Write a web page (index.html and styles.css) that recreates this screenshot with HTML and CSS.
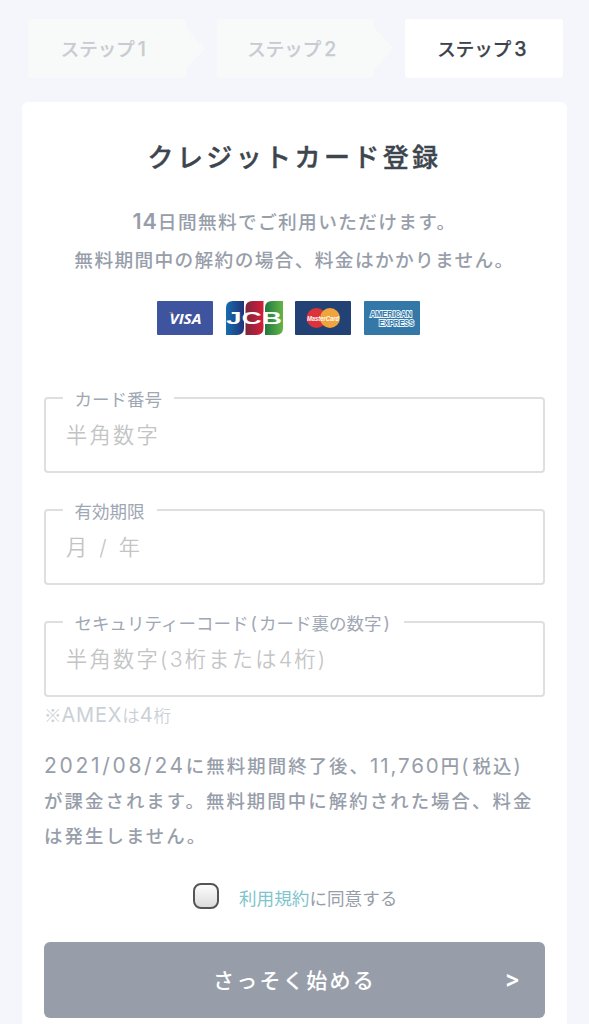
FILE: index.html
```html
<!DOCTYPE html>
<html lang="ja">
<head>
<meta charset="utf-8">
<title>クレジットカード登録</title>
<link rel="stylesheet" href="styles.css">
</head>
<body>
<ol class="steps">
  <li class="step step-next"><span>ステップ<span class="step-num">1</span></span></li>
  <li class="step step-next"><span>ステップ<span class="step-num">2</span></span></li>
  <li class="step step-current"><span>ステップ<span class="step-num">3</span></span></li>
</ol>
<main class="card">
  <h1 class="title">クレジットカード登録</h1>
  <p class="lead"><span class="lead-num">14</span>日間無料でご利用いただけます。<br>無料期間中の解約の場合、料金はかかりません。</p>
  <div class="brands">
    <svg class="brand" viewBox="0 0 56 34">
      <rect width="56" height="34" rx="1" fill="#3f549f"/>
      <text x="12.5" y="22.5" textLength="32" lengthAdjust="spacingAndGlyphs" class="visa">VISA</text>
      <path d="M11.500 11.500h4l1.500 3c-1.500-1.500-3-2.300-5.500-3z" fill="#e5aa55"/>
    </svg>
    <svg class="brand" viewBox="0 0 57 34">
      <defs>
        <linearGradient id="blue"><stop stop-color="#176cad"/><stop offset="1" stop-color="#203379"/></linearGradient>
        <linearGradient id="red"><stop stop-color="#7d263e"/><stop offset="1" stop-color="#d51e38"/></linearGradient>
        <linearGradient id="green"><stop stop-color="#207a41"/><stop offset="1" stop-color="#65b447"/></linearGradient>
      </defs>
      <path d="M0 34V7q0-7 7-7h11v27q0 7-7 7z" fill="url(#blue)"/>
      <path d="M19.500 34V7q0-7 7-7h11v27q0 7-7 7z" fill="url(#red)"/>
      <path d="M39 34V7q0-7 7-7h11v27q0 7-7 7z" fill="url(#green)"/>
      <text x="0" y="23" textLength="56" lengthAdjust="spacingAndGlyphs" class="jcb">JCB</text>
    </svg>
    <svg class="brand" viewBox="0 0 56 34">
      <rect width="56" height="34" rx="1" fill="#224275"/>
      <circle cx="21.500" cy="17" r="10" fill="#dc333a"/>
      <circle cx="35" cy="17" r="10" fill="#f1a43c"/>
      <text x="12" y="20" textLength="32" lengthAdjust="spacingAndGlyphs" class="master">MasterCard</text>
    </svg>
    <svg class="brand" viewBox="0 0 56 34">
      <rect width="56" height="34" rx="1" fill="#3478a8"/>
      <text x="6" y="15.500" textLength="42" lengthAdjust="spacingAndGlyphs" class="amex">AMERICAN</text>
      <text x="15" y="24.500" textLength="35" lengthAdjust="spacingAndGlyphs" class="amex">EXPRESS</text>
    </svg>
  </div>
  <form class="form">
    <fieldset class="field">
      <legend class="label">カード番号</legend>
      <input class="input" type="text" placeholder="半角数字">
    </fieldset>
    <fieldset class="field">
      <legend class="label">有効期限</legend>
      <input class="input input-date" type="text" placeholder="月 / 年">
    </fieldset>
    <fieldset class="field">
      <legend class="label">セキュリティーコード<span class="paren">(</span>カード裏の数字<span class="paren">)</span></legend>
      <input class="input" type="text" placeholder="半角数字(3桁または4桁)">
    </fieldset>
    <p class="note">※<span class="note-latin">AMEX</span>は<span class="note-latin">4</span>桁</p>
    <p class="notice"><span class="date">2021/08/24</span>に無料期間終了後、<span class="price">11,760</span>円<span class="notice-paren">(</span>税込<span class="notice-paren">)</span><br>が課金されます。無料期間中に解約された場合、料金<br>は発生しません。</p>
    <div class="agree">
      <input class="check" type="checkbox" id="agree">
      <label for="agree"><a class="link">利用規約</a>に同意する</label>
    </div>
    <button class="submit" type="button"><span>さっそく始める</span><span class="chevron">&gt;</span></button>
  </form>
</main>
</body>
</html>
```
FILE: styles.css
```css
* { box-sizing: border-box; }
body {
  margin: 0;
  height: 1024px;
  overflow: hidden;
  background: #f4f6fc;
  font-family: "Noto Sans CJK JP", sans-serif;
  color: #979eaa;
}
.steps {
  display: flex;
  gap: 31px;
  margin: 0;
  padding: 19px 28px 0;
  list-style: none;
}
.step {
  position: relative;
  flex: 0 0 157.500px;
  height: 59px;
  display: flex;
  align-items: center;
  justify-content: center;
  padding: 0 4px 2px 0;
  border-radius: 3px;
  font-size: 18.500px;
  font-weight: 500;
  white-space: nowrap;
  -webkit-text-stroke: .25px currentColor;
}
.step-num { margin-left: 3px; font: 500 19.500px/1 Inter, sans-serif; }
.step-next { background: #f8faf9; color: #c8ccd2; padding-right: 7px; }
.step-next::after {
  content: "";
  position: absolute;
  left: 157px;
  top: 8px;
  width: 20px;
  height: 43px;
  background: #f8faf9;
  clip-path: polygon(0 0, 100% 50%, 0 100%);
}
.step-current { background: #fff; color: #3c434c; }
.card {
  width: 545px;
  height: 940px;
  margin: 24px 0 0 22px;
  padding: 34px 22px 0;
  border-radius: 6px 6px 0 0;
  background: #fff;
}
.title {
  margin: 0;
  font-size: 26px;
  line-height: 40px;
  letter-spacing: 3.400px;
  font-weight: 500;
  text-align: center;
  color: #3d454e;
  -webkit-text-stroke: .4px currentColor;
}
.lead {
  margin: 26px 0 0;
  font-size: 18.700px;
  line-height: 37.500px;
  letter-spacing: 1.350px;
  font-weight: 500;
  text-align: center;
  white-space: nowrap;
}
.lead-num { font: 600 21.500px/1 Inter, sans-serif; letter-spacing: 1px; }
.brands { display: flex; justify-content: center; gap: 12.500px; margin-top: 24px; padding-right: 12px; }
.brand { height: 34px; display: block; }
.brand text { fill: #fff; }
.visa { font: italic 700 15px "Open Sans", sans-serif; }
.jcb { font: 700 17px "Liberation Sans", sans-serif; }
.master { font: italic 700 7px "Liberation Sans", sans-serif; }
.brand .amex { font: 700 8.500px "Liberation Sans", sans-serif; fill: #3478a8; stroke: #eaf4fa; stroke-width: 1.800px; paint-order: stroke; }
.form { display: flex; flex-direction: column; margin-top: 50px; }
.field {
  margin: 0 0 24px;
  height: 88px;
  min-width: 0;
  padding: 0 20px 0 17px;
  border: 2px solid #dedfe0;
  border-radius: 4px;
}
.label {
  padding: 2px 12px 0 11.500px;
  font-size: 17.500px;
  line-height: 24px;
  color: #a0a7b4;
  font-weight: 400;
}
.paren { display: inline-block; width: 10.500px; line-height: 1; font-family: Inter, sans-serif; text-align: center; }
.input {
  display: block;
  width: 100%;
  height: 32px;
  margin: 8px 0 0 3px;
  padding: 0;
  border: 0;
  outline: 0;
  font: 350 21.200px Inter, "Noto Sans CJK JP", sans-serif;
  letter-spacing: 2.300px;
  background: transparent;
}
.input-date { word-spacing: 1.500px; }
.input::placeholder { color: #c3c4c5; opacity: 1; }
.note { margin: -20.500px 0 0; font-size: 17.500px; line-height: 28px; color: #cbd0d7; font-weight: 350; }
.note-latin { font: 400 20px/1 Inter, sans-serif; letter-spacing: .8px; }
.notice {
  margin: 19.500px 0 0;
  font-size: 18.400px;
  line-height: 35px;
  letter-spacing: 2.080px;
  font-weight: 500;
  white-space: nowrap;
}
.date, .price, .notice-paren { font-family: Inter, sans-serif; font-weight: 400; line-height: 1; }
.date { font-size: 21px; letter-spacing: 2.700px; }
.price { font-size: 20.500px; letter-spacing: 1.900px; }
.notice-paren { font-size: 20px; letter-spacing: 4px; }
.agree {
  display: flex;
  align-items: center;
  gap: 20px;
  margin: 27px 0 0 149px;
  font-size: 17.600px;
  line-height: 28px;
}
.check {
  appearance: none;
  width: 26px;
  height: 26px;
  margin: 0;
  border: 2px solid #555;
  border-radius: 8px;
  background: linear-gradient(#fdfdfd, #dcdcdc);
}
.agree label { padding-top: 5px; line-height: 26px; }
.link { color: #80c5cd; }
.submit {
  position: relative;
  height: 76px;
  margin-top: 31px;
  padding: 0 0 2px;
  border: 0;
  border-radius: 6px;
  background: #979eaa;
  color: #fff;
  font: 500 21px "Noto Sans CJK JP", sans-serif;
  letter-spacing: 2.300px;
}
.chevron { position: absolute; right: 25px; top: 22px; font: 600 23px/30px Inter, sans-serif; letter-spacing: 0; }
```
